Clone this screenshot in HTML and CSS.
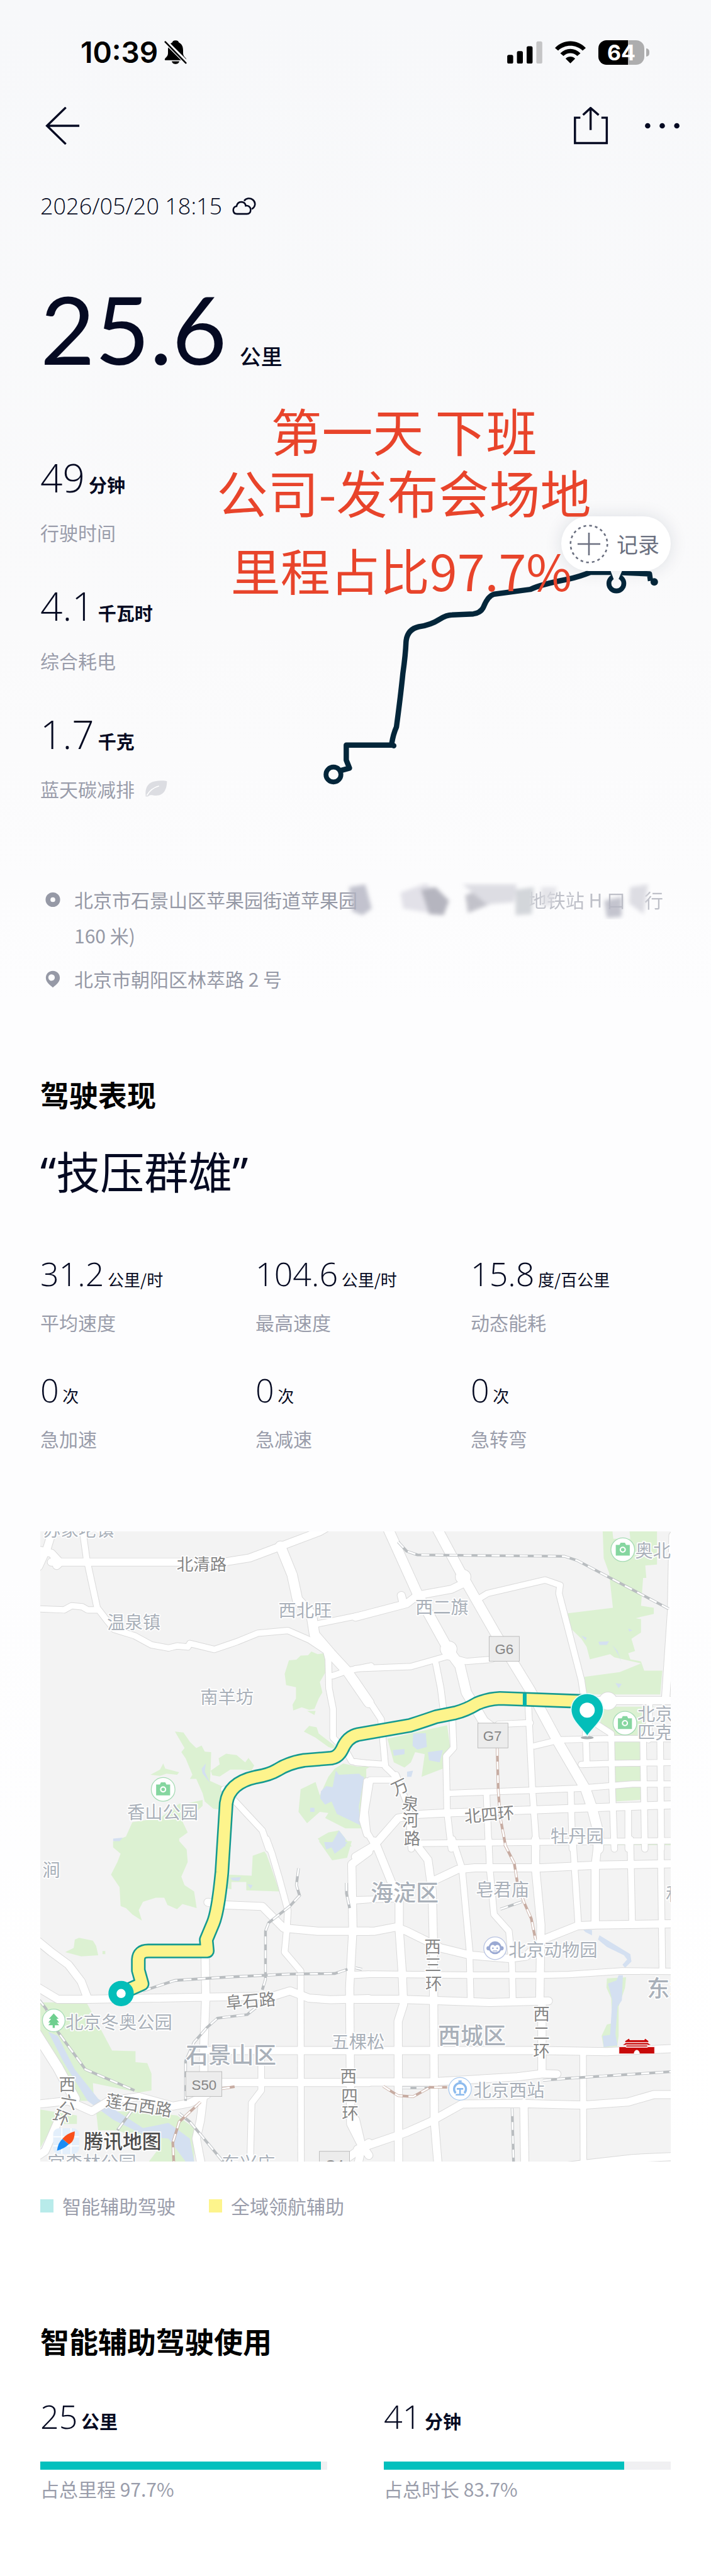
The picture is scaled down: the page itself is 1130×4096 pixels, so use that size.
FILE: index.html
```html
<!DOCTYPE html>
<html lang="zh-CN">
<head>
    <meta charset="UTF-8">
    <meta name="viewport" content="width=device-width, initial-scale=1.0">
    <title>行程详情</title>
    <link rel="stylesheet" href="styles.css">
</head>
<body>

<div class="status-bar">
    <div class="status-left">
        <span class="clock">10:39</span>
        <svg class="icon-bell" viewBox="0 0 42 46">
            <path d="M21 1C17 1 15 3 15 5C9 8 7 13 7 20V25C7 29 5 31 2 34C0 37 1 38 4 38H38C41 38 42 37 40 34C37 31 35 29 35 25V20C35 13 33 8 27 5C27 3 25 1 21 1ZM14 40H28C27 44 24 45 21 45S15 44 14 40Z" fill="#000"/>
            <path d="M2 3L41 42" stroke="#f7f8fa" stroke-width="8"/>
            <path d="M2 4L40 43" stroke="#000" stroke-width="3" stroke-linecap="round"/>
        </svg>
    </div>
    <div class="status-right">
        <svg class="icon-signal" viewBox="0 0 65 42">
            <rect x="0" y="26" width="11" height="16" rx="3"/>
            <rect x="18" y="19" width="11" height="23" rx="3"/>
            <rect x="36" y="10" width="11" height="32" rx="3"/>
            <rect x="54" y="1" width="11" height="41" rx="3" fill="#c5c5c6"/>
        </svg>
        <svg class="icon-wifi" viewBox="0 0 58 42">
            <path d="M0 13C16-4 42-4 58 13L52 18C39 6 19 6 6 18ZM10 23C21 12 37 12 48 23L42 28C34 21 24 21 16 28ZM20 33C25 28 33 28 38 33L29 42Z"/>
        </svg>
        <span class="battery"><span class="battery-level">64</span></span>
    </div>
</div>

<main class="container">
    <nav class="nav">
        <button class="icon-button" aria-label="返回">
            <svg class="icon-back" viewBox="0 0 64 70"><path d="M38 1L3 35L38 69M3 35H63"/></svg>
        </button>
        <div class="nav-actions">
            <button class="icon-button" aria-label="分享">
                <svg class="icon-share" viewBox="0 0 64 70"><path d="M12 20H2V67H61V20H51M31 43V2M17 15L31 2L46 15"/></svg>
            </button>
            <button class="icon-button" aria-label="更多">
                <svg class="icon-more" viewBox="0 0 64 70"><circle cx="5" cy="35" r="5"/><circle cx="32" cy="35" r="5"/><circle cx="59" cy="35" r="5"/></svg>
            </button>
        </div>
    </nav>

    <div class="date">
        <span>2026/05/20 18:15</span>
        <svg class="icon-cloud" viewBox="0 0 44 32"><path d="M9 30C4 30 2 27 2 23C2 19 5 16 8 16C9 11 12 8 17 8C21 8 24 10 25 15C30 14 34 18 34 22C34 27 32 30 27 30ZM22 6C26 1 33 0 38 4C44 9 43 17 36 21"/></svg>
    </div>

    <h1 class="distance">25.6 <span class="distance-unit">公里</span></h1>

    <section class="hero">
        <div class="hero-stats">
            <div>
                <div class="value value-large">49 <span class="unit">分钟</span></div>
                <div class="label">行驶时间</div>
            </div>
            <div>
                <div class="value value-large">4.1 <span class="unit">千瓦时</span></div>
                <div class="label">综合耗电</div>
            </div>
            <div>
                <div class="value value-large">1.7 <span class="unit">千克</span></div>
                <div class="label">蓝天碳减排
                    <svg class="icon-leaf" viewBox="0 0 44 32"><path d="M2 31C0 16 5 4 20 2C28 1 36 0 42 2C42 17 36 29 22 29C15 29 10 26 6 31Z" fill="#dcdde2"/><path d="M4 29C9 20 16 14 27 11" fill="none" stroke="#fff" stroke-width="2"/></svg>
                </div>
            </div>
        </div>
        <div class="track">
            <svg viewBox="560 1040 685 430">
                <path class="track-line" d="M625 1432L643 1427L637 1412V1384H725M722 1382Q725 1363 731 1350Q739 1290 743 1250Q748 1215 749 1190Q751 1167 773 1162Q795 1159 812 1148Q825 1140 835 1140L875 1138Q890 1136 895 1123Q903 1104 914 1101L982 1092Q1000 1083 1052 1073Q1075 1068 1094 1060L1140 1060L1205 1063L1207 1076"/>
                <circle cx="726" cy="1385" r="5" fill="#04263a"/>
                <circle cx="1214" cy="1078" r="7" fill="#04263a"/>
                <circle class="track-ring" cx="613" cy="1439" r="14"/>
                <circle class="track-ring" cx="1143" cy="1081" r="14"/>
                <path d="M1131 1054H1155L1147 1073H1138Z" fill="#fff"/>
            </svg>
            <button class="record">
                <svg class="icon-plus" viewBox="0 0 72 72"><circle cx="36" cy="36" r="34" stroke-dasharray="5 5.7"/><path d="M36 15V57M15 36H57"/></svg>
                记录
            </button>
        </div>
        <div class="note">
            <p>第一天 下班</p>
            <p>公司-发布会场地</p>
            <p class="note-last">里程占比97.7%</p>
        </div>
    </section>

    <section class="places">
        <div class="place">
            <svg class="icon-place" viewBox="0 0 28 36"><circle cx="14" cy="18" r="9" fill="none" stroke="#9699a6" stroke-width="9"/></svg>
            <div class="place-text">
                <div class="place-line"><span>北京市石景山区苹果园街道苹果园</span><span class="faded">地铁站 H 口　行</span></div>
                <div>160 米)</div>
                <svg class="smudge" viewBox="0 0 640 70" preserveAspectRatio="none">
                    <defs><filter id="soft"><feGaussianBlur stdDeviation="4"/></filter></defs>
                    <g filter="url(#soft)">
                        <path d="M30 10L60 5L72 50L55 62L36 55Z" fill="#b3b4c2" opacity=".8"/>
                        <path d="M125 20L172 3L195 22L180 58L130 50Z" fill="#e2e1e8"/>
                        <path d="M163 15L190 10L215 35L205 62L178 60Z" fill="#b5b5bf"/>
                        <path d="M245 25L290 8L310 15L300 38L250 58Z" fill="#c2c2ca"/>
                        <path d="M240 5H340L335 38L285 42Z" fill="#dddde3"/>
                        <path d="M338 15L372 10L368 60L338 62Z" fill="#d3d6da"/>
                        <path d="M385 10H415L405 45H385Z" fill="#dcdce1" opacity=".7"/>
                        <path d="M502 35L535 28L534 65L507 67Z" fill="#b5b6c3" opacity=".8"/>
                        <path d="M550 10L583 5L575 60L548 40Z" fill="#dddde3"/>
                    </g>
                </svg>
            </div>
        </div>
        <div class="place">
            <svg class="icon-place" viewBox="0 0 28 36"><path d="M14 3C6 3 1 9 1 16C1 24 8 29 14 34C20 29 27 24 27 16C27 9 22 3 14 3ZM14 21A6 6 0 1 1 14 10A6 6 0 0 1 14 21Z" fill="#9699a6"/></svg>
            <div class="place-text">北京市朝阳区林萃路 2 号</div>
        </div>
    </section>

    <section class="driving">
        <h2>驾驶表现</h2>
        <p class="rating">“技压群雄”</p>
        <div class="stats">
            <div><div class="value">31.2 <span class="unit-small">公里/时</span></div><div class="label">平均速度</div></div>
            <div><div class="value">104.6 <span class="unit-small">公里/时</span></div><div class="label">最高速度</div></div>
            <div><div class="value">15.8 <span class="unit-small">度/百公里</span></div><div class="label">动态能耗</div></div>
            <div><div class="value">0 <span class="unit-small">次</span></div><div class="label">急加速</div></div>
            <div><div class="value">0 <span class="unit-small">次</span></div><div class="label">急减速</div></div>
            <div><div class="value">0 <span class="unit-small">次</span></div><div class="label">急转弯</div></div>
        </div>
    </section>

    <svg class="map" viewBox="75 2845 1170 1170">
        <defs>
            <!-- the map is drawn in four tiles: nw, ne, sw, se -->
            <g id="roads">
                <g transform="translate(60 2830) scale(.3954 .3827)">
                    <path class="major" d="M90 188H900L1020 168L1170 110L1350 40L1400 10M100 20L70 120L30 210M30 130L90 145L130 190L115 205"/>
                    <path class="minor" d="M235 20L255 170L305 410L350 470L385 515L480 545L560 590L640 605L680 595L730 600L740 583L855 612L960 575L1060 533L1200 520L1300 565L1380 620L1390 660L1393 800L1412 900V1040L1470 1100L1500 1155L1580 1165"/>
                    <path class="minor" d="M30 415L150 420L185 400L235 405L260 420H305M1330 490L1590 435M1410 740L1480 715L1590 692M900 1290L1080 1490L1110 1580M1570 1250L1550 1440L1570 1510"/>
                    <path class="wide" d="M1165 110L1220 250L1245 370L1310 440L1325 540L1400 630L1480 720L1580 870"/>
                </g>
                <g transform="translate(660 2830) scale(.3954 .3827)">
                    <path class="wide" d="M150 20L290 340L440 620L490 690L520 820L600 960L650 1000M380 20L505 260L660 540L820 810L950 1060L1080 1290L1110 1380L1140 1500V1580"/>
                    <path class="major" d="M0 455L240 390L290 350L450 320L510 290M215 350L225 390M1000 860H1500M1490 60L1483 430L1455 860"/>
                    <path class="minor" d="M580 365L620 340L890 275L960 300L955 340L985 460L1060 760L1070 830L1080 1000L1085 1160"/>
                    <path class="minor" d="M0 705L260 695L430 645L520 670L640 660M375 670L400 800L412 900L455 950L460 1090L425 1130L430 1400L450 1580M0 760L120 950L140 1180L190 1230M0 1160L140 1170"/>
                    <path class="minor" d="M200 1245H70L45 1400L55 1500L90 1560M190 1220L250 1380L262 1580M810 860L830 1290L850 1580M440 1310L830 1295L1060 1285L1240 1270L1300 1265H1500"/>
                    <path class="major" d="M90 1560L200 1430L300 1412L430 1405L850 1390L1110 1380L1500 1365"/>
                    <path class="minor" d="M670 975L820 968M840 1080L960 1050L1200 1045H1500M1060 1170L1200 1165L1500 1160M1140 980L1200 1020L1205 1290L1215 1580M1350 1050L1358 1580M1430 1060L1435 1580M1380 860L1375 1050M280 1553L1500 1540M615 1310L625 1580M1010 1290L1018 1580M1280 1390V1580"/>
                    <circle cx="1185" cy="862" r="22"/>
                    <circle cx="505" cy="260" r="15"/>
                    <circle cx="437" cy="610" r="18"/>
                </g>
                <g transform="translate(60 3420) scale(.3954 .389)">
                    <path class="minor" d="M1100 -10L1125 60L1160 180L1200 330L1195 420L1185 530L1260 620L1262 1580M1075 1010V1190L1030 1250L1022 1580M1580 635L1500 637M1580 280L1510 285"/>
                    <path class="major" d="M825 292L905 305L1080 312L1180 415L1340 430H1580M1580 50L1500 110L1505 420L1490 700L1495 1350L1540 1440L1580 1500M30 480L90 530L170 590L230 670L260 750"/>
                    <path class="major" d="M30 700L120 755H260L540 750L800 745L1130 740L1210 715L1300 750L1400 757L1580 752M812 550L815 740L805 1000V1200L790 1330L770 1420L800 1580M830 1000H1580M890 1152H1580"/>
                    <path class="major" d="M30 1255L170 1240L280 1290L360 1240L500 1220L660 1265L740 1250L820 1210M120 1340L60 1480L30 1500M1470 1520L1580 1440"/>
                    <path class="wide" d="M20 920L120 1080L200 1230"/>
                </g>
                <g transform="translate(660 3420) scale(.3954 .389)">
                    <path class="major" d="M0 75L90 20M90 0L170 200L205 260V420L220 640L225 780L200 860L202 1580M280 10L340 90L360 240L365 460L368 980L370 1330L390 1580M845 -10V130L870 400L865 763M365 190L480 135L560 128H870L1130 115L1500 108"/>
                    <path class="minor" d="M455 -10L500 130L535 520L540 750M625 -10L630 130L650 350L720 430L735 590L738 750M1020 -10L1045 390M1290 -10L1298 380M1432 -10L1440 620M0 640L80 635L530 640H870L1000 637L1250 620L1500 622M1068 1010L1070 1530M0 280L180 275"/>
                    <path class="major" d="M0 430H90L190 410L240 430L400 510L540 545L720 560L800 550L880 470L1040 405L1130 400L1500 395M1140 -10L1125 120V390M0 755H210L630 770L905 763M0 1000H880L1180 1005L1500 990M0 1150H350L760 1125L880 1110L945 1112M875 770V1110"/>
                    <path class="major" d="M10 1470L240 1390L350 1340L500 1255L780 1253L1070 1260L1280 1245L1400 1210H1500M790 1250L795 1580M1000 1550L1300 1515L1500 1505M0 1330L30 1460L10 1550"/>
                </g>
            </g>
            <g id="rails">
                <path transform="translate(660 2830) scale(.3954 .3827)" d="M200 90L240 135L290 153L980 160L1040 180L1470 415"/>
                <path transform="translate(60 3420) scale(.3954 .389)" d="M520 715L670 665L900 650L1200 635L1420 632L1480 612M1250 130L1240 210L1255 260L1210 310L1110 390L1095 430V660L1080 710M1050 795L1010 828L870 845L820 890L760 960L720 1050V1240M30 755L65 800L120 910L250 1090L480 1190M465 1290L400 1380M690 1300L740 1340L790 1400L900 1535M1475 200V250L1490 320"/>
                <path transform="translate(660 3420) scale(.3954 .389)" d="M680 325L780 290M735 1275L742 1540M880 1142L1000 1132L1490 1100M220 1178H340M0 605L30 612"/>
            </g>
            <g id="subway">
                <path transform="translate(660 2830) scale(.3954 .3827)" d="M665 1090L670 1300L680 1430L705 1568"/>
                <path transform="translate(60 3420) scale(.3954 .389)" d="M790 1245L690 1340L660 1440L665 1540M890 1182L950 1172"/>
                <path transform="translate(660 3420) scale(.3954 .389)" d="M700 15L745 105L760 200L790 290L825 370L845 470M130 1170L200 1215L270 1220L350 1175H430"/>
            </g>
            <path id="route" d="M1090 3161L928 3155Q905 3156 885 3165Q865 3177 845 3182L810 3189Q790 3196 762 3205L665 3222Q645 3226 635 3250Q628 3264 615 3266L565 3270Q535 3275 515 3288Q500 3297 475 3301Q425 3312 420 3350L412 3478Q405 3550 396 3572L383 3603L385 3624H275Q258 3624 257 3640V3660L264 3685L235 3698"/>
            <g id="camera">
                <circle r="22" fill="#fff" stroke="#a5dbb4" stroke-width="1.5"/>
                <path d="M-13 -9H-6L-4 -13H4L6 -9H13V11H-13Z" fill="#86d6a0"/>
                <circle r="4.5" fill="none" stroke="#fff" stroke-width="2.5"/>
            </g>
        </defs>

        <rect x="75" y="2845" width="1170" height="1170" fill="#f3f3f3"/>

        <!-- parks -->
        <g fill="#dcf1d2">
            <g transform="translate(60 2830) scale(.3954 .3827)">
                <path d="M1205 665L1240 662L1260 642L1295 640L1310 622L1340 635L1370 630L1378 720L1350 770L1362 820L1345 850L1325 900L1300 905L1265 893L1225 908L1222 880L1238 850V795L1192 785L1185 730ZM1290 910L1330 910L1325 930ZM1275 1010L1300 983L1335 990L1345 1020L1420 1080V1095L1390 1085L1330 1040ZM670 1010L710 1015L740 1060L770 1090L795 1078L810 1108L840 1110L838 1180L835 1250L900 1280V1390L850 1385L810 1350L800 1310L770 1240L740 1240L752 1220L720 1140L700 1110L715 1090Z"/>
                <path d="M838 1200L880 1170L875 1140L910 1118L960 1125L1000 1160L1015 1138L1042 1175L1030 1200L980 1195L930 1195L880 1228L845 1222ZM555 1220L600 1195L615 1165L625 1190L690 1208L680 1220L630 1215L600 1225ZM470 1450L600 1430L690 1360L720 1360L800 1342L800 1370L770 1400L700 1435L730 1500L690 1530V1568H380V1545L440 1520Z"/>
                <path d="M1260 1290L1330 1255L1350 1320L1390 1230L1420 1190L1460 1165L1568 1190V1300L1545 1480L1470 1480L1375 1430L1390 1405L1350 1400L1290 1455L1250 1400ZM1340 1530L1390 1500L1440 1490L1500 1568H1370Z"/>
            </g>
            <g transform="translate(660 2830) scale(.3954 .3827)">
                <path d="M1160 30H1205L1210 75H1290L1285 30H1415V200L1360 205L1365 265H1350L1340 400L1400 410V440L1315 460L1340 465V530L1295 560L1312 620L1280 630L1290 660L1340 670L1355 715H1440L1430 830H1080L1075 745L1240 722L1340 680L1215 650L1195 635L1100 660L1085 600L1060 560L1010 510L990 437L1208 410L1190 240L1165 170Z"/>
                <path d="M1150 890H1400L1350 1050V1340L1220 1350L1200 1000L1150 970ZM150 1045L430 980L445 1090L410 1190L310 1230L325 1120L280 1110L260 1160L230 1185L180 1160ZM0 1180L70 1180L0 1220Z"/>
            </g>
            <g transform="translate(60 3420) scale(.3954 .389)">
                <path d="M380 0H690L725 40L730 100L700 170L715 210L760 240L772 320L705 300L680 325L635 305L620 270L580 270L520 290L500 330L515 380L470 350L440 320L415 310L410 220L370 160L400 100L415 60L380 30ZM920 160L1030 165L1035 70L1090 50L1100 65L1120 120L1160 240L1005 235V195H935V230L910 225ZM155 530L195 510L200 470L220 462L285 475L300 500L310 545L230 550ZM330 525H343V540H330ZM1345 0H1500L1478 80L1408 92Z"/>
                <path d="M30 770H255L375 1000L485 1003V1055L540 1060L560 1110V1190L500 1200L285 1155L290 1240L210 1240L100 1000L30 900ZM30 1280L210 1310V1350L100 1350L30 1480ZM300 1290H500L680 1310L760 1370V1540H540L600 1460L400 1380L310 1380Z"/>
            </g>
            <path transform="translate(660 3420) scale(.3954 .389)" d="M1180 655L1270 650L1265 700L1235 790L1235 930L1228 980L1165 985L1155 930L1180 875L1205 870L1200 750L1178 700ZM1160 10H1480V20H1160Z"/>
        </g>

        <!-- lakes and rivers -->
        <g fill="#d4e0f1">
            <path transform="translate(60 2830) scale(.3954 .3827)" d="M1355 1300L1380 1275L1410 1280L1425 1200L1440 1220L1535 1215L1558 1240L1530 1340L1540 1465L1490 1440L1430 1410L1405 1350L1375 1365L1352 1335ZM1405 1555L1440 1490L1470 1530V1568H1400ZM1305 1380H1325V1400H1305ZM795 1190L815 1165L810 1205L835 1260L800 1215ZM380 1530L425 1525L410 1542H380Z"/>
            <path transform="translate(660 2830) scale(.3954 .3827)" d="M270 1020L330 1018L335 1085L290 1098L268 1080ZM175 1100L230 1095V1120L180 1128ZM340 1110L410 1100L395 1160L345 1150ZM242 1205L270 1200L262 1230H242ZM1140 575L1190 572L1180 590H1145ZM1060 545L1085 555L1080 568ZM1205 590L1230 620L1250 680L1235 640ZM1220 775L1250 780L1235 800ZM1280 510L1300 520L1285 525ZM0 1220L40 1230L20 1350L0 1450Z"/>
            <path transform="translate(60 3420) scale(.3954 .389)" d="M75 910L120 930L200 1090L310 1230L400 1290L520 1370L640 1345L740 1420L760 1530H720L640 1420L540 1410L380 1330L260 1240L150 1060ZM1370 5H1480L1460 30L1420 60L1405 30L1380 40ZM930 175L980 172L970 190L940 188ZM1010 205L1035 210L1025 228Z"/>
            <path transform="translate(660 3420) scale(.3954 .389)" d="M1060 415L1110 425V450L1080 435ZM1145 450L1290 540L1295 575L1265 605L1253 590L1275 565L1260 545L1180 505L1138 470ZM1185 680L1225 665L1235 640H1255L1250 760L1230 790L1220 920L1230 975L1165 983L1160 930L1195 925L1205 760Z"/>
        </g>

        <use href="#roads" class="road-edge"/>
        <use href="#roads" class="road"/>
        <use href="#rails" class="rail"/>
        <use href="#rails" class="rail-dash"/>
        <use href="#subway" class="subway"/>
        <use href="#subway" class="rail-dash"/>

        <use href="#route" class="route-edge"/>
        <use href="#route" class="route"/>
        <path d="M974 3146V3169" stroke="#05b3ac" stroke-width="7"/>

        <!-- place names -->
        <g class="place-name">
            <text x="80" y="2854">苏家坨镇</text>
            <text x="199" y="3026">温泉镇</text>
            <text x="517" y="3004">西北旺</text>
            <text x="372" y="3165">南羊坊</text>
            <text x="236" y="3379">香山公园</text>
            <text x="1179" y="2893">奥北</text>
            <text x="771" y="2998">西二旗</text>
            <text x="1183" y="3196">北京</text>
            <text x="1183" y="3230">匹克</text>
            <text x="1022" y="3423">牡丹园</text>
            <text x="79" y="3486">涧</text>
            <text x="122" y="3769">北京冬奥公园</text>
            <text x="615" y="3805">五棵松</text>
            <text x="883" y="3522">皂君庙</text>
            <text x="944" y="3634">北京动物园</text>
            <text x="879" y="3895">北京西站</text>
            <text x="1236" y="3531">和</text>
            <text x="88" y="4029">宫森林公园</text>
            <text x="412" y="4030">东兴庄</text>
        </g>
        <g class="district-name">
            <text x="345" y="3833">石景山区</text>
            <text x="688" y="3532">海淀区</text>
            <text x="813" y="3797">西城区</text>
            <text x="1201" y="3709">东城</text>
        </g>
        <g class="road-name">
            <text x="328" y="2917">北清路</text>
            <text x="863" y="3386" transform="rotate(-5 863 3386)">北四环</text>
            <text x="420" y="3732" transform="rotate(-5 420 3732)">阜石路</text>
            <text x="195" y="3912" transform="rotate(9 195 3912)">莲石西路</text>
        </g>
        <g class="road-name road-name-vertical">
            <text x="742" y="3331" transform="rotate(-25 742 3319)">万</text>
            <text x="762" y="3362" transform="rotate(8 762 3350)">泉</text>
            <text x="762" y="3393">河</text>
            <text x="765" y="3426">路</text>
            <text x="125" y="3883">西</text>
            <text x="127" y="3916" transform="rotate(10 127 3905)">六</text>
            <text x="115" y="3945" transform="rotate(22 115 3933)">环</text>
            <text x="647" y="3868">西</text>
            <text x="649" y="3904">四</text>
            <text x="650" y="3937">环</text>
            <text x="803" y="3627">西</text>
            <text x="804" y="3661">三</text>
            <text x="805" y="3696">环</text>
            <text x="1005" y="3752">西</text>
            <text x="1005" y="3787">二</text>
            <text x="1005" y="3821">环</text>
        </g>
        <g class="shield">
            <rect x="908" y="3040" width="56" height="46"/><text x="936" y="3073">G6</text>
            <rect x="887" y="3201" width="56" height="46"/><text x="914" y="3234">G7</text>
            <rect x="345" y="3848" width="67" height="46"/><text x="379" y="3882">S50</text>
            <rect x="593" y="3996" width="56" height="46"/><text x="621" y="4030">G4</text>
        </g>

        <!-- points of interest -->
        <use href="#camera" x="303" y="3324"/>
        <use href="#camera" x="1156" y="2879"/>
        <use href="#camera" x="1160" y="3201"/>
        <g transform="translate(100 3753)">
            <circle r="21" fill="#fff" stroke="#a5dbb4" stroke-width="1.5"/>
            <path d="M0 -13L9 -3H5L10 4H6L10 9H2V14H-2V9H-10L-6 4H-10L-5 -3H-9Z" fill="#6fcf8f"/>
        </g>
        <g transform="translate(919 3619)">
            <circle r="21" fill="#fff" stroke="#b9c4e2" stroke-width="1.5"/>
            <circle r="12" cy="-1" fill="#9aa9d3"/>
            <circle r="4" cx="-12" fill="#9aa9d3"/><circle r="4" cx="12" fill="#9aa9d3"/>
            <path d="M-9 0C-9 -7 -3 -8 0 -4C3 -8 9 -7 9 0C9 10 -9 10 -9 0Z" fill="#fff"/>
            <circle r="1.5" cx="-4" cy="0" fill="#9aa9d3"/><circle r="1.5" cx="4" cy="0" fill="#9aa9d3"/>
            <path d="M-4 5H4" stroke="#9aa9d3" stroke-width="1.5"/>
        </g>
        <g transform="translate(854 3880)">
            <circle r="21" fill="#fff" stroke="#a9c9ee" stroke-width="1.5"/>
            <path d="M-8 8A11 11 0 1 1 8 8" fill="none" stroke="#8dbbee" stroke-width="4"/>
            <path d="M-3 -14H3M-6 0H6M0 0V10M-8 11H8" fill="none" stroke="#8dbbee" stroke-width="3"/>
        </g>
        <path d="M1149 3802H1215V3815H1187C1187 3806 1177 3806 1177 3815H1149ZM1155 3799L1162 3794H1202L1209 3799ZM1160 3794V3791L1168 3786L1169 3789H1196L1197 3786L1204 3791V3794ZM1162 3798H1202V3803H1162Z" fill="#c80a0a" stroke="#fff" stroke-width="1"/>

        <!-- start and end of the trip -->
        <circle cx="225" cy="3703" r="16" fill="#fff" stroke="#03beb9" stroke-width="15"/>
        <ellipse cx="1090" cy="3228" rx="12" ry="3" fill="#a9aeb1"/>
        <path d="M1090 3225C1078 3208 1060 3196 1060 3176A30 30 0 0 1 1120 3176C1120 3196 1102 3208 1090 3225Z" fill="#03beb9" stroke="#e2fbfa" stroke-width="2"/>
        <circle cx="1090" cy="3177" r="14" fill="#fff"/>

        <!-- map provider -->
        <rect x="99" y="3953" width="48" height="48" rx="11" fill="#e3effb"/>
        <path d="M99 3969H147M99 3986H147M115 3953V4001M132 3953V4001" stroke="#fff" stroke-width="2"/>
        <path d="M139 3959Q139 3978 128 3983L116 3973Q124 3963 139 3959Z" fill="#f9501b"/>
        <path d="M106 3995Q108 3980 116 3973L128 3983Q120 3991 106 3995Z" fill="#1a8cf5"/>
        <text class="provider" x="156" y="3991">腾讯地图</text>
    </svg>

    <div class="legend">
        <span class="legend-item"><i class="swatch swatch-assist"></i>智能辅助驾驶</span>
        <span class="legend-item"><i class="swatch swatch-pilot"></i>全域领航辅助</span>
    </div>

    <section class="assist">
        <h2>智能辅助驾驶使用</h2>
        <div class="usage">
            <div>
                <div class="value">25 <span class="unit">公里</span></div>
                <div class="bar"><div class="bar-fill" style="width: 97.7%"></div></div>
                <div class="label">占总里程 97.7%</div>
            </div>
            <div>
                <div class="value">41 <span class="unit">分钟</span></div>
                <div class="bar"><div class="bar-fill" style="width: 83.7%"></div></div>
                <div class="label">占总时长 83.7%</div>
            </div>
        </div>
    </section>
</main>

</body>
</html>
```
FILE: styles.css
```css
* { box-sizing: border-box; }
body { margin: 0; color: #050a22; background: linear-gradient(#f7f8fa 0, #fafafb 1000px, #fdfdfe 1600px, #fdfdfe 2500px, #fff 3400px); font-family: "Noto Sans CJK SC", sans-serif; font-size: 30px; line-height: 40px; }
h1, h2, p { margin: 0; }
button { border: none; background: none; padding: 0; color: inherit; font: inherit; cursor: pointer; }
svg { display: block; }

/* status bar */
.status-bar { display: flex; justify-content: space-between; align-items: center; padding: 60px 98px 0 128px; color: #000; }
.status-left { display: flex; align-items: center; gap: 10px; }
.status-right { display: flex; align-items: center; gap: 20px; }
.clock { font: 600 46px/46px Inter, sans-serif; }
.icon-bell { width: 36px; height: 40px; }
.icon-signal { width: 56px; height: 36px; }
.icon-wifi { width: 49px; height: 36px; }
.battery { position: relative; margin-right: 8px; }
.battery-level { display: block; width: 73px; border-radius: 13px; background: linear-gradient(90deg, #000 64%, #adadae 64%); color: #fff; font: 700 34px/39px Inter, sans-serif; text-align: center; }
.battery::after { content: ""; position: absolute; right: -8px; top: 13px; width: 5px; height: 13px; border-radius: 0 5px 5px 0; background: #adadae; }

.container { padding: 62px 64px 119px; }

/* nav */
.nav { display: flex; justify-content: space-between; align-items: center; height: 64px; padding-left: 8px; }
.nav-actions { display: flex; gap: 58px; margin-right: -14px; }
.icon-button svg { width: 55px; height: 60px; fill: none; stroke: #050a22; stroke-width: 4; }
.icon-button .icon-more { fill: #050a22; stroke: none; }

.date { display: flex; align-items: center; gap: 16px; margin-top: 76px; font: 300 36px/40px "Open Sans", sans-serif; }
.icon-cloud { width: 38px; height: 28px; fill: none; stroke: #050a22; stroke-width: 3; }

.distance { margin-top: 99px; font: 400 150px/150px Lato, sans-serif; }
.distance-unit { margin-left: -18px; font: 500 34px/34px "Noto Sans CJK SC", sans-serif; }

.value { font: 300 52px/56px "Open Sans", sans-serif; white-space: nowrap; }
.value-large { font-size: 62px; line-height: 64px; }
.unit, .unit-small { margin-left: -8px; font: 700 29px/29px "Noto Sans CJK SC", sans-serif; }
.value-large .unit { margin-left: -10px; }
.unit-small { font-size: 26px; font-weight: 400; }
.label { color: #9a9dab; }

/* trip summary */
.hero { position: relative; display: flex; justify-content: space-between; align-items: flex-end; margin-top: 130px; }
.hero-stats { display: grid; gap: 65px; }
.hero-stats .label { display: flex; align-items: center; gap: 16px; margin-top: 35px; }
.icon-leaf { width: 37px; height: 28px; }
.track { position: relative; width: 58%; margin-bottom: 16px; }
.track-line { fill: none; stroke: #04263a; stroke-width: 10; stroke-linejoin: round; }
.track-ring { fill: #fafafb; stroke: #04263a; stroke-width: 9; }
.record { position: absolute; right: 0; top: -72px; display: flex; align-items: center; gap: 13px; height: 87px; padding: 0 18px 0 13px; border-radius: 44px; background: #fff; box-shadow: 0 0 28px rgba(20, 30, 60, .12); color: #6b7080; font-size: 34px; }
.icon-plus { width: 62px; height: 62px; fill: none; stroke: #6b7080; stroke-width: 3; }
.note { position: absolute; left: 154px; right: 0; top: -93px; color: #e8442b; font-size: 81px; line-height: 98px; text-align: center; white-space: nowrap; pointer-events: none; }
.note-last { margin-top: 27px; padding-right: 8px; font-size: 79px; }

/* start and end address */
.places { display: grid; gap: 12px; margin-top: 128px; color: #9699a6; line-height: 57px; }
.place { display: flex; gap: 22px; padding-left: 8px; }
.icon-place { width: 24px; height: 31px; margin-top: 13px; }
.place-text { position: relative; flex: 1; }
.place-line { display: flex; justify-content: space-between; padding-right: 12px; }
.faded { opacity: .6; }
.smudge { position: absolute; right: -13px; top: 0; width: 58%; height: 60px; }

h2 { color: #000; font-size: 46px; font-weight: 700; line-height: 56px; }

/* driving */
.driving { margin-top: 126px; }
.rating { margin-top: 57px; font: 400 70px/80px "Noto Sans", "Noto Sans CJK SC", sans-serif; }
.stats { display: grid; grid-template-columns: repeat(3, 1fr); gap: 60px 24px; margin-top: 93px; }
.stats .label { margin-top: 29px; }

/* map */
.map { width: 100%; margin-top: 128px; overflow: hidden; }
.map text { font-family: "Noto Sans CJK SC", sans-serif; }
.minor { stroke-width: var(--minor); }
.major { stroke-width: var(--major); }
.wide { stroke-width: var(--wide); }
.road-edge { --minor: 34px; --major: 42px; --wide: 52px; fill: none; stroke: #dadada; stroke-width: 46px; stroke-linejoin: round; stroke-linecap: round; }
.road { --minor: 28px; --major: 36px; --wide: 46px; fill: none; stroke: #fff; stroke-width: 40px; stroke-linejoin: round; stroke-linecap: round; }
.rail, .subway { fill: none; stroke: #b9bdc0; stroke-width: 13px; }
.subway { stroke: #c7aca2; }
.rail-dash { fill: none; stroke: #fff; stroke-width: 8px; stroke-dasharray: 38 28; }
.route-edge { fill: none; stroke: #159a90; stroke-width: 27; stroke-linejoin: round; stroke-linecap: round; }
.route { fill: none; stroke: #fdf48c; stroke-width: 21; stroke-linejoin: round; stroke-linecap: round; }
.place-name, .district-name, .road-name { fill: #a9b0b9; stroke: #fff; stroke-width: 4px; stroke-linejoin: round; paint-order: stroke; font-size: 33px; }
.district-name { font-size: 42px; font-weight: 500; }
.road-name { fill: #858585; font-size: 31px; }
.road-name-vertical { text-anchor: middle; }
.shield rect { fill: #ececec; stroke: #b5b5b5; stroke-width: 1px; }
.map .shield text { fill: #858585; font-family: "Liberation Sans", sans-serif; font-size: 26px; text-anchor: middle; }
.provider { fill: #4c4c4c; stroke: #fff; stroke-width: 4px; paint-order: stroke; font-size: 36px; font-weight: 500; }

.legend { display: flex; gap: 53px; margin-top: 50px; color: #9a9dab; }
.legend-item { display: flex; align-items: center; gap: 14px; }
.swatch { width: 21px; height: 21px; background: #b8ebea; }
.swatch-pilot { background: #fdf48c; }

/* assisted driving usage */
.assist { margin-top: 166px; }
.usage { display: grid; grid-template-columns: 1fr 1fr; gap: 90px; margin-top: 65px; }
.bar { height: 13px; margin: 44px 0 10px; background: #f0f0f2; }
.bar-fill { height: 100%; background: #03c0bd; }
```
